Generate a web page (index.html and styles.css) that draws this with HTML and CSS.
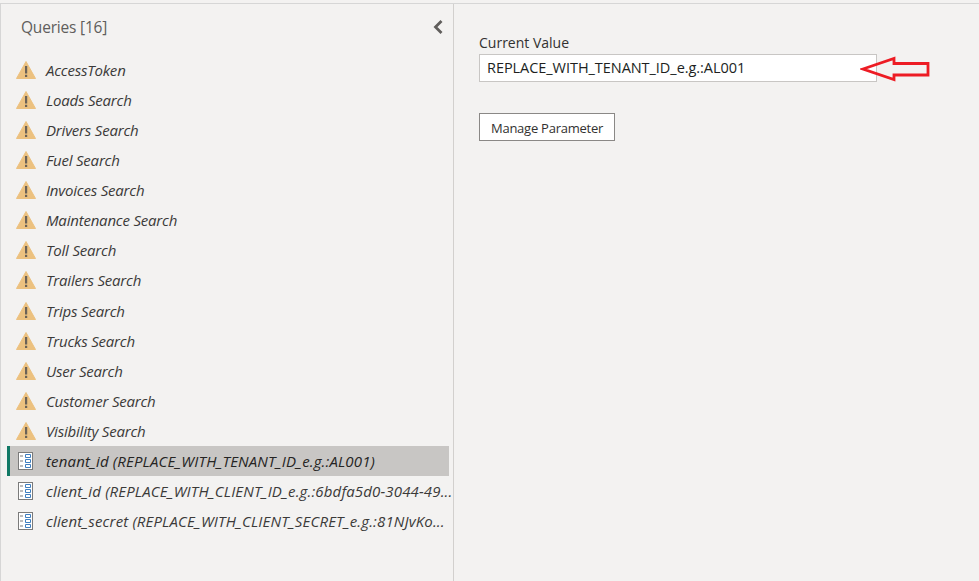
FILE: index.html
```html
<!DOCTYPE html>
<html lang="en">
  <head>
    <meta charset="UTF-8" />
    <title>Queries</title>
    <link rel="stylesheet" href="styles.css">
  </head>
  <body>
    <svg width="0" height="0" class="icon-defs">
      <symbol id="warn" viewBox="0 0 20 18">
        <path d="M10 0.5 L19.5 17.5 L0.5 17.5 Z" fill="#ecc17f" stroke="#ecc17f" stroke-linejoin="round" />
        <rect x="9" y="5" width="2.2" height="7.5" fill="#6b6257" />
        <rect x="9" y="13.8" width="2.2" height="2.2" fill="#6b6257" />
      </symbol>
      <symbol id="param" viewBox="0 0 15 18">
        <rect x="0.5" y="0.5" width="14" height="17" fill="#fff" stroke="#7b7b7b" />
        <path d="M2 4 H5 M2 9 H5 M2 14 H5" stroke="#7b7b7b" />
        <path d="M7.5 2.5 H12.5 V5.5 H7.5 Z M7.5 7.5 H12.5 V10.5 H7.5 Z M7.5 12.5 H12.5 V15.5 H7.5 Z" fill="#fff" stroke="#3f7fc0" />
      </symbol>
    </svg>

    <div class="app">
      <aside class="queries">
        <div class="queries-head">
          <h2>Queries [16]</h2>
          <svg class="collapse" width="10" height="14" viewBox="0 0 10 14">
            <path d="M8.5 1 L2.5 7 L8.5 13" fill="none" stroke="#605e5c" stroke-width="2.8" />
          </svg>
        </div>
        <ul class="query-list">
          <li class="query"><svg class="warn-icon"><use href="#warn" /></svg><span>AccessToken</span></li>
          <li class="query"><svg class="warn-icon"><use href="#warn" /></svg><span>Loads Search</span></li>
          <li class="query"><svg class="warn-icon"><use href="#warn" /></svg><span>Drivers Search</span></li>
          <li class="query"><svg class="warn-icon"><use href="#warn" /></svg><span>Fuel Search</span></li>
          <li class="query"><svg class="warn-icon"><use href="#warn" /></svg><span>Invoices Search</span></li>
          <li class="query"><svg class="warn-icon"><use href="#warn" /></svg><span>Maintenance Search</span></li>
          <li class="query"><svg class="warn-icon"><use href="#warn" /></svg><span>Toll Search</span></li>
          <li class="query"><svg class="warn-icon"><use href="#warn" /></svg><span>Trailers Search</span></li>
          <li class="query"><svg class="warn-icon"><use href="#warn" /></svg><span>Trips Search</span></li>
          <li class="query"><svg class="warn-icon"><use href="#warn" /></svg><span>Trucks Search</span></li>
          <li class="query"><svg class="warn-icon"><use href="#warn" /></svg><span>User Search</span></li>
          <li class="query"><svg class="warn-icon"><use href="#warn" /></svg><span>Customer Search</span></li>
          <li class="query"><svg class="warn-icon"><use href="#warn" /></svg><span>Visibility Search</span></li>
          <li class="query param selected"><svg class="param-icon"><use href="#param" /></svg><span>tenant_id (REPLACE_WITH_TENANT_ID_e.g.:AL001)</span></li>
          <li class="query param"><svg class="param-icon"><use href="#param" /></svg><span>client_id (REPLACE_WITH_CLIENT_ID_e.g.:6bdfa5d0-3044-49...</span></li>
          <li class="query param"><svg class="param-icon"><use href="#param" /></svg><span>client_secret (REPLACE_WITH_CLIENT_SECRET_e.g.:81NJvKo...</span></li>
        </ul>
      </aside>

      <main class="details">
        <label class="field-label" for="current-value">Current Value</label>
        <div class="value-box" id="current-value">REPLACE_WITH_TENANT_ID_e.g.:AL001</div>
        <button class="manage-btn" type="button">Manage Parameter</button>

        <!-- red callout drawn over the screenshot -->
        <svg class="callout" width="71" height="26" viewBox="0 0 71 26">
          <path d="M3 13 L34 2.5 L34 7.5 L68 7.5 L68 19 L34 19 L34 23.5 Z" fill="none" stroke="#ed1c24" stroke-width="2.8" />
        </svg>
      </main>
    </div>
  </body>
</html>
```

FILE: styles.css
```css
html,
body {
  margin: 0;
  height: 100%;
}

body {
  font-family: "Open Sans", "Noto Sans", sans-serif;
  background: #f3f2f1;
  color: #323130;
  overflow: hidden;
}

.icon-defs {
  display: block;
  height: 0;
}

.app {
  display: flex;
  height: 578px;
  box-sizing: border-box;
  border-top: 1px solid #d6d6d6;
  border-left: 1px solid #d6d6d6;
  margin-top: 3px;
}

.queries {
  width: 452px;
  flex: none;
  border-right: 1px solid #d2d0ce;
}

.queries-head {
  display: flex;
  align-items: center;
  justify-content: space-between;
  height: 45px;
  padding: 0 10px 0 20px;
}

.queries-head h2 {
  margin: 0;
  font-size: 15.5px;
  font-weight: 400;
  color: #605e5c;
  letter-spacing: -0.2px;
}

.collapse {
  display: block;
}

.query-list {
  list-style: none;
  margin: 6px 0 0 6px;
  padding: 0;
  width: 442px;
}

.query {
  display: flex;
  align-items: center;
  height: 30.07px;
  font-size: 15px;
  font-style: italic;
  letter-spacing: -0.2px;
  color: #3b3a39;
}

.query.param {
  letter-spacing: 0.15px;
}

.query span {
  white-space: nowrap;
}

.query.selected {
  background: #c8c6c4;
  color: #252423;
  box-shadow: inset 3px 0 0 #117865;
}

.warn-icon {
  width: 20px;
  height: 18px;
  margin: 0 10px 0 9px;
  flex: none;
}

.param-icon {
  width: 15px;
  height: 18px;
  margin: 0 13px 0 11px;
  flex: none;
}

.details {
  position: relative;
  flex: 1;
  padding: 29px 0 0 25px;
}

.field-label {
  display: block;
  font-size: 14px;
  line-height: 20px;
  color: #323130;
}

.value-box {
  width: 389px;
  height: 26px;
  margin-top: 1px;
  padding-left: 7px;
  background: #fff;
  border: 1px solid #c8c6c4;
  font-size: 14.5px;
  line-height: 26px;
  letter-spacing: -0.05px;
  color: #201f1e;
}

.manage-btn {
  display: block;
  width: 136px;
  height: 28px;
  margin-top: 31px;
  padding: 1px 0 0;
  background: #fff;
  border: 1px solid #8a8886;
  border-radius: 0;
  font-family: inherit;
  font-size: 13px;
  letter-spacing: -0.25px;
  color: #323130;
}

.callout {
  position: absolute;
  left: 406px;
  top: 52px;
}
```
